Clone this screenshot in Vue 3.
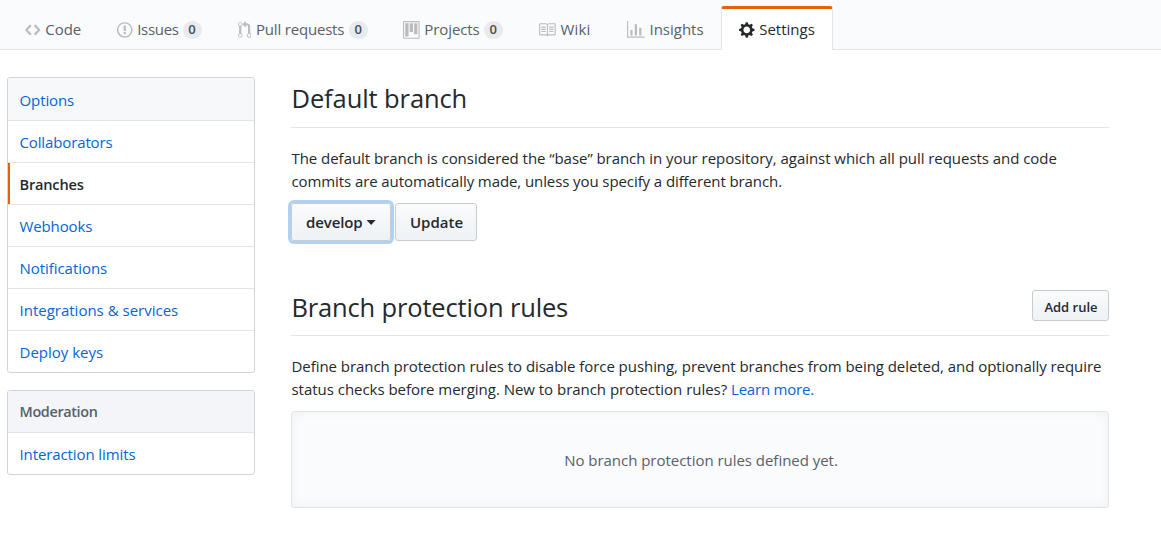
<script setup>
const tabs = [
  { id: 'code', label: 'Code' },
  { id: 'issues', label: 'Issues', count: 0 },
  { id: 'pulls', label: 'Pull requests', count: 0 },
  { id: 'projects', label: 'Projects', count: 0 },
  { id: 'wiki', label: 'Wiki' },
  { id: 'insights', label: 'Insights' },
  { id: 'settings', label: 'Settings', active: true },
]
const icons = {
  code: { w: 14, d: 'M9.5 3L8 4.5 11.5 8 8 11.5 9.5 13 14 8 9.5 3zm-5 0L0 8l4.500 5L6 11.500 2.500 8 6 4.500 4.500 3z' },
  issues: { w: 14, d: 'M7 2.300c3.140 0 5.700 2.560 5.700 5.700s-2.560 5.700-5.700 5.700A5.710 5.710 0 0 1 1.300 8c0-3.140 2.560-5.700 5.700-5.700zM7 1C3.140 1 0 4.140 0 8s3.140 7 7 7 7-3.140 7-7-3.140-7-7-7zm1 3H6v5h2V4zm0 6H6v2h2v-2z' },
  pulls: { w: 12, d: 'M11 11.280V5c-.03-.78-.34-1.470-.94-2.060C9.460 2.350 8.780 2.030 8 2H7V0L4 3l3 3V4h1c.27.02.48.11.69.31.21.2.3.42.31.69v6.280A1.993 1.993 0 0 0 10 15a1.993 1.993 0 0 0 1-3.720zm-1 2.920c-.66 0-1.200-.55-1.200-1.200 0-.65.55-1.200 1.200-1.200.65 0 1.200.55 1.200 1.200 0 .65-.55 1.200-1.200 1.200zM4 3c0-1.110-.89-2-2-2a1.993 1.993 0 0 0-1 3.720v6.560A1.993 1.993 0 0 0 2 15a1.993 1.993 0 0 0 1-3.720V4.720c.59-.34 1-.98 1-1.720zm-.8 10c0 .66-.55 1.200-1.200 1.200-.65 0-1.200-.55-1.200-1.200 0-.65.55-1.200 1.200-1.200.65 0 1.200.55 1.200 1.200zM2 4.200C1.340 4.200.8 3.650.8 3c0-.65.55-1.200 1.200-1.200.65 0 1.200.55 1.200 1.200 0 .65-.55 1.200-1.200 1.200z' },
  projects: { w: 15, d: 'M10 12h3V2h-3v10zm-4-2h3V2H6v8zm-4 4h3V2H2v12zm-1 1h13V1H1v14zM14 0H1a1 1 0 0 0-1 1v14a1 1 0 0 0 1 1h13a1 1 0 0 0 1-1V1a1 1 0 0 0-1-1z' },
  wiki: { w: 16, d: 'M3 5h4v1H3V5zm0 3h4V7H3v1zm0 2h4V9H3v1zm11-5h-4v1h4V5zm0 2h-4v1h4V7zm0 2h-4v1h4V9zm2-6v9c0 .55-.45 1-1 1H9.500l-1 1-1-1H2c-.55 0-1-.45-1-1V3c0-.55.45-1 1-1h5.500l1 1 1-1H15c.55 0 1 .45 1 1zm-8 .5L7.500 3H2v9h6V3.500zm7-.5H9.500l-.5.5V12h6V3z' },
  insights: { w: 16, d: 'M16 14v1H0V0h1v14h15zM5 13H3V8h2v5zm4 0H7V3h2v10zm4 0h-2V6h2v7z' },
  settings: { w: 14, d: 'M14 8.770v-1.600l-1.940-.64-.45-1.090.88-1.840-1.130-1.130-1.810.91-1.090-.45-.69-1.920h-1.600l-.63 1.940-1.110.45-1.840-.88-1.130 1.130.91 1.810-.45 1.090L0 7.230v1.590l1.940.64.45 1.090-.88 1.840 1.130 1.130 1.810-.91 1.090.45.69 1.920h1.590l.63-1.940 1.110-.45 1.840.88 1.130-1.130-.92-1.810.47-1.090L14 8.750v.02zM7 11c-1.660 0-3-1.340-3-3s1.340-3 3-3 3 1.340 3 3-1.340 3-3 3z' },
}
const groups = [
  {
    items: [
      { label: 'Options', cls: 'hovered t-20' },
      { label: 'Collaborators', cls: 't-15' },
      { label: 'Branches', cls: 'selected' },
      { label: 'Webhooks', cls: 't-15' },
      { label: 'Notifications', cls: 't-05' },
      { label: 'Integrations & services', cls: '' },
      { label: 'Deploy keys', cls: '' },
    ],
  },
  { heading: 'Moderation', items: [{ label: 'Interaction limits', cls: 't-10' }] },
]
</script>

<template>
  <div class="page">
    <nav class="tabs">
      <a v-for="t in tabs" :key="t.id" class="tab" :class="[t.id, { active: t.active }]">
        <svg class="icon" :width="icons[t.id].w * 1.11" height="17.8" :viewBox="`0 0 ${icons[t.id].w} 16`">
          <path fill-rule="evenodd" :d="icons[t.id].d" />
        </svg>
        <span class="label">{{ t.label }}</span>
        <span v-if="t.count !== undefined" class="counter">{{ t.count }}</span>
      </a>
    </nav>

    <div class="body">
      <aside class="sidebar">
        <div v-for="(g, i) in groups" :key="i" class="menu">
          <div v-if="g.heading" class="menu-heading">{{ g.heading }}</div>
          <a v-for="m in g.items" :key="m.label" class="menu-item" :class="m.cls">{{ m.label }}</a>
        </div>
      </aside>

      <main class="content">
        <header class="subhead">
          <h2>Default branch</h2>
        </header>
        <p class="text">
          <span class="line l1">The default branch is considered the “base” branch in your repository, against which all pull requests and code</span>
          <span class="line l2">commits are automatically made, unless you specify a different branch.</span>
        </p>
        <div class="actions">
          <button class="btn select focused">develop<i class="caret"></i></button>
          <button class="btn update">Update</button>
        </div>

        <header class="subhead rules">
          <h2>Branch protection rules</h2>
          <button class="btn small">Add rule</button>
        </header>
        <p class="text">
          <span class="line l3">Define branch protection rules to disable force pushing, prevent branches from being deleted, and optionally require</span>
          <span class="line l4">status checks before merging. New to branch protection rules? <a class="link">Learn more.</a></span>
        </p>
        <div class="blank">No branch protection rules defined yet.</div>
      </main>
    </div>
  </div>
</template>

<style>
html, body { margin: 0; background: #fff; overflow: hidden; }
</style>

<style scoped>
* { box-sizing: border-box; }
.page { height: 540px; overflow: hidden; background: #fff; color: #24292e; font: 15px/23px "Open Sans", "Noto Sans", sans-serif; }

.tabs { display: flex; align-items: flex-end; height: 50px; padding-left: 7px; background: #fafbfc; border-bottom: 1px solid #e1e4e8; }
.tab { display: flex; align-items: center; height: 44px; margin-bottom: -1px; padding: 4px 0 0 18px; color: #586069; white-space: nowrap; }
.icon { flex: none; margin-right: 4px; fill: #babcbf; }
.label { padding: 0 0 2px 0.7px; }
.code { width: 92px; }
.issues { width: 121px; }
.pulls { width: 165px; }
.projects { width: 136px; }
.wiki { width: 88px; }
.insights { width: 112px; }
.settings { width: 112px; }
.issues .label { width: 46px; letter-spacing: -0.3px; }
.pulls .label { width: 93.5px; letter-spacing: -0.19px; }
.projects .label { width: 60px; letter-spacing: -0.1px; }
.wiki .icon { margin-left: -1px; }
.wiki .label { letter-spacing: 0.2px; }
.counter { width: 19px; height: 18px; border-radius: 9px; background: #e8eaec; color: #444d56; font-size: 13px; font-weight: 600; line-height: 17px; text-align: center; }
.tab.active { padding: 1px 0 0 17px; background: #fff; border: 1px solid #e1e4e8; border-top: 3px solid #e36209; border-bottom: 0; border-radius: 3px 3px 0 0; color: #24292e; }
.active .icon { fill: #24292e; }

.body { display: flex; gap: 36px; padding: 27px 0 0 7px; }
.sidebar { flex: none; width: 248px; }
.menu { border: 1px solid #d1d5da; border-radius: 3px; overflow: hidden; margin-bottom: 17px; }
.menu-item, .menu-heading { display: block; height: 42px; padding: 10px 0 0 11.5px; line-height: 22px; border-top: 1px solid #e1e4e8; color: #0366d6; white-space: nowrap; }
.menu-item:first-child { border-top: 0; padding-top: 11px; }
.menu-heading { height: 41px; border-top: 0; background: #f3f5f8; color: #586069; font-size: 14.4px; font-weight: 600; letter-spacing: -0.35px; }
.hovered { background: #f6f8fa; }
.selected { box-shadow: inset 2px 0 0 #e36209; color: #24292e; font-size: 14.6px; font-weight: 600; letter-spacing: -0.2px; }
.t-05 { letter-spacing: -0.05px; }
.t-10 { letter-spacing: -0.1px; }
.t-15 { letter-spacing: -0.13px; }
.t-20 { letter-spacing: -0.1px; }

.content { width: 818px; }
.subhead { display: flex; justify-content: space-between; height: 51px; border-bottom: 1px solid #e1e4e8; }
h2 { margin: 0; padding: 3px 0 0 0.5px; font-size: 25.5px; font-weight: 400; line-height: 36px; letter-spacing: -0.1px; }
.rules { height: 47px; margin-top: 48px; }
.rules h2 { padding-top: 0; letter-spacing: -0.16px; }
.text { margin: 19px 0 0; }
.line { display: block; height: 23px; padding-left: 0.5px; white-space: nowrap; }
.l1 { letter-spacing: -0.043px; }
.l2 { letter-spacing: -0.09px; }
.l3 { letter-spacing: -0.052px; }
.l4 { letter-spacing: -0.028px; }
.link { color: #0366d6; letter-spacing: -0.2px; }
.actions { display: flex; gap: 4px; margin-top: 10px; }
.btn { height: 38px; margin: 0; padding: 0; border: 1px solid #c8ccd0; border-radius: 3px; background: linear-gradient(#fafbfc, #eff3f6 90%); color: #24292e; font: 600 15px/36px "Open Sans", "Noto Sans", sans-serif; }
.select { display: flex; align-items: center; width: 100px; padding-left: 14px; letter-spacing: -0.1px; }
.focused { box-shadow: 0 0 0 3px #b1d1f3; }
.caret { width: 9px; height: 5px; margin: 1px 0 0 4px; background: #24292e; clip-path: polygon(0 0, 100% 0, 50% 100%); }
.update { width: 82px; padding-left: 1px; }
.small { width: 77px; height: 31px; margin-top: 1px; padding: 3px 0 0 1px; font-size: 13px; line-height: 26px; }
.blank { height: 97px; margin-top: 10px; padding-left: 2px; border: 1px solid #e1e4e8; border-radius: 3px; background: #fafbfc; box-shadow: inset 0 0 10px rgba(27, 31, 35, 0.05); color: #586069; line-height: 97px; letter-spacing: -0.03px; text-align: center; }
</style>
